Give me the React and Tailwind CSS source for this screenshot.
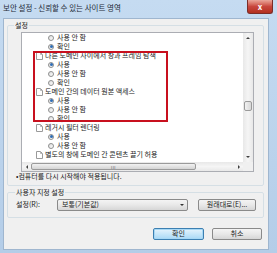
import React from "react";

const rows = [
  ["r", "사용 안 함", false],
  ["r", "확인", true],
  ["h", "다른 도메인 사이에서 창과 프레임 탐색"],
  ["r", "사용", true],
  ["r", "사용 안 함", false],
  ["r", "확인", false],
  ["h", "도메인 간의 데이터 원본 액세스"],
  ["r", "사용", true],
  ["r", "사용 안 함", false],
  ["r", "확인", false],
  ["h", "레거시 필터 렌더링"],
  ["r", "사용", true],
  ["r", "사용 안 함", false],
  ["h", "별도의 창에 도메인 간 콘텐츠 끌기 허용"],
];

function Radio({ checked }) {
  return (
    <span className="w-[6px] h-[6px] rounded-full border border-[#8e8f8f] bg-gradient-to-br from-[#dcdcdc] to-[#ffffff] flex items-center justify-center shrink-0">
      {checked && <span className="w-[3px] h-[3px] rounded-full bg-[#2f6db5]" />}
    </span>
  );
}

function PageIcon() {
  return (
    <svg width="7" height="8" viewBox="0 0 7 8" className="shrink-0">
      <path d="M0.5 0.5 H4.5 L6.5 2.5 V7.5 H0.5 Z" fill="#fff" stroke="#9a9a9a" strokeWidth="1" />
      <path d="M4.5 0.5 V2.5 H6.5" fill="none" stroke="#b5b5b5" strokeWidth="1" />
    </svg>
  );
}

function Row({ row }) {
  if (row[0] === "h") {
    return (
      <div className="h-[9px] flex items-center pl-[14px] gap-[2px] whitespace-nowrap">
        <PageIcon />
        <span>{row[1]}</span>
      </div>
    );
  }
  return (
    <div className="h-[9px] flex items-center pl-[26px] gap-[3px] whitespace-nowrap">
      <Radio checked={row[2]} />
      <span>{row[1]}</span>
    </div>
  );
}

function Btn({ children, primary, className }) {
  return (
    <div
      className={
        "h-[12px] rounded-[2px] border flex items-center justify-center " +
        (primary
          ? "border-[#3c7fb1] bg-gradient-to-b from-[#e6f4fc] to-[#a9d9f6] shadow-[0_0_0_1px_#a7d8f5_inset] "
          : "border-[#8a8a8a] bg-gradient-to-b from-[#f4f4f4] via-[#e8e8e8] to-[#d6d6d6] ") +
        className
      }
    >
      {children}
    </div>
  );
}

export default function App() {
  return (
    <div className="w-[277px] h-[253px] bg-gradient-to-b from-[#c5dbf1] to-[#b4cde8] flex flex-col font-['Noto_Sans_CJK_KR',sans-serif] text-[7px] leading-[9px] text-[#222] overflow-hidden">
      {/* title bar */}
      <div className="h-[18px] flex items-start justify-between shrink-0">
        <span className="ml-[3px] mt-[3px] text-[7.5px] leading-[9px] text-[#1e2a38]">
          보안 설정 - 신뢰할 수 있는 사이트 영역
        </span>
        <div className="mr-[4px] w-[26px] h-[14px] rounded-b-[3px] border border-t-0 border-[#7b2d28] bg-gradient-to-b from-[#e9a69b] via-[#c8463d] to-[#b2301f] flex items-center justify-center text-white text-[8px] font-bold">
          x
        </div>
      </div>

      {/* client area */}
      <div className="ml-[3px] w-[266px] h-[232px] bg-[#f0f0f0] border border-[#9fb6cf] flex flex-col">
        <fieldset className="ml-[3px] mt-[1.5px] w-[257px] border border-[#d5dfe5] rounded-[2px] pb-[4px]">
          <legend className="ml-[6px] px-[1px] leading-[9px]">설정</legend>
          <div className="ml-[13px] mt-[2.5px] w-[233px] h-[140px] border border-[#abadb3] bg-white flex flex-col">
            <div className="flex h-[129px]">
              <div className="relative w-[221px] overflow-hidden">
                {rows.map((r, i) => (
                  <Row key={i} row={r} />
                ))}
                <div className="absolute left-[11px] top-[18px] w-[135px] h-[71px] border-2 border-[#c8101e]" />
              </div>
              {/* vertical scrollbar */}
              <div className="w-[10px] bg-gradient-to-r from-[#e8e8e8] via-[#f5f5f5] to-[#e8e8e8] flex flex-col items-center">
                <div className="h-[10px] flex items-center justify-center">
                  <span className="w-0 h-0 border-l-[2px] border-r-[2px] border-b-[2px] border-l-transparent border-r-transparent border-b-[#404040]" />
                </div>
                <div className="flex-1 w-full flex flex-col items-center">
                  <div className="mt-[58px] w-[8px] h-[10px] rounded-[2px] border border-[#9a9a9a] bg-gradient-to-r from-[#f2f2f2] to-[#d8d8d8]" />
                </div>
                <div className="h-[10px] flex items-center justify-center">
                  <span className="w-0 h-0 border-l-[2px] border-r-[2px] border-t-[2px] border-l-transparent border-r-transparent border-t-[#404040]" />
                </div>
              </div>
            </div>
            {/* horizontal scrollbar */}
            <div className="flex h-[9px] bg-gradient-to-b from-[#e8e8e8] via-[#f5f5f5] to-[#e8e8e8]">
              <div className="w-[221px] flex items-center">
                <div className="w-[9px] flex items-center justify-center">
                  <span className="w-0 h-0 border-t-[2px] border-b-[2px] border-r-[2px] border-t-transparent border-b-transparent border-r-[#404040]" />
                </div>
                <div className="w-[165px] h-[7px] rounded-[2px] border border-[#9a9a9a] bg-gradient-to-b from-[#f2f2f2] to-[#d4d4d4] flex items-center justify-center">
                  <span className="text-[4px] leading-[4px] text-[#555] tracking-[0.5px]">III</span>
                </div>
                <div className="flex-1" />
                <div className="w-[9px] flex items-center justify-center">
                  <span className="w-0 h-0 border-t-[2px] border-b-[2px] border-l-[2px] border-t-transparent border-b-transparent border-l-[#404040]" />
                </div>
              </div>
              <div className="w-[10px] bg-[#f0f0f0]" />
            </div>
          </div>
          <div className="ml-[8px] h-[9px] whitespace-nowrap">•컴퓨터를 다시 시작해야 적용됩니다.</div>
        </fieldset>

        <fieldset className="ml-[3px] mt-[2px] w-[257px] border border-[#d5dfe5] rounded-[2px] pb-[6px]">
          <legend className="ml-[7px] px-[1px] leading-[9px]">사용자 지정 설정</legend>
          <div className="flex items-center mt-[1.5px]">
            <span className="ml-[8px] w-[41px]">설정(R):</span>
            <div className="w-[131px] h-[12px] rounded-[2px] border border-[#8a8a8a] bg-gradient-to-b from-[#f4f4f4] via-[#e8e8e8] to-[#d6d6d6] flex items-center justify-between pl-[4px] pr-[3px]">
              <span>보통(기본값)</span>
              <span className="w-0 h-0 border-l-[2px] border-r-[2px] border-t-[2px] border-l-transparent border-r-transparent border-t-[#333]" />
            </div>
            <Btn className="ml-[10px] w-[58px]">원래대로(E)...</Btn>
          </div>
        </fieldset>

        <div className="flex justify-end gap-[8px] mr-[6px] mt-[10px]">
          <Btn primary className="w-[51px]">확인</Btn>
          <Btn className="w-[50px]">취소</Btn>
        </div>
      </div>
    </div>
  );
}
